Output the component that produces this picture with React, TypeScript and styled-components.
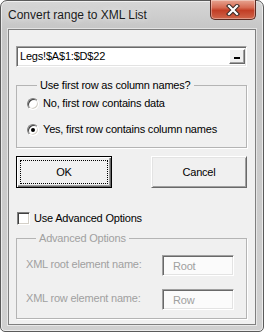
import styled, { createGlobalStyle } from "styled-components";

const GlobalStyle = createGlobalStyle`
  html, body {
    margin: 0;
    padding: 0;
    background: #ffffff;
  }
  body {
    font-family: "Liberation Sans", Arial, sans-serif;
  }
`;

const Window = styled.div`
  width: 264px;
  height: 332px;
  box-sizing: border-box;
  display: flex;
  flex-direction: column;
  padding: 0 7px 6px;
  border: 1px solid #5a5a5a;
  border-radius: 7px 7px 5px 5px;
  background: linear-gradient(to bottom, #d6d6d6 0, #c6c6c6 28px, #cbcbcb 60%, #d0d0d0 100%);
  box-shadow: inset 0 0 0 1px rgba(255, 255, 255, 0.6);
`;

const TitleBar = styled.div`
  height: 28px;
  display: flex;
  align-items: flex-start;
  justify-content: space-between;
  flex-shrink: 0;
`;

const Title = styled.div`
  padding-top: 7px;
  font-size: 12px;
  line-height: 15px;
  color: #1b1b1b;
  text-shadow: 0 0 6px rgba(255, 255, 255, 0.9);
`;

const CloseButton = styled.div`
  width: 46px;
  height: 20px;
  margin-top: -1px;
  box-sizing: border-box;
  display: flex;
  align-items: center;
  justify-content: center;
  border: 1px solid #5b2b22;
  border-top: none;
  border-radius: 0 0 5px 5px;
  background: linear-gradient(to bottom, #e7a592 0, #d66a52 40%, #c23e25 55%, #d0664b 100%);
  box-shadow: inset 0 0 0 1px rgba(255, 255, 255, 0.35);
`;

const Client = styled.div`
  flex: 1;
  display: flex;
  flex-direction: column;
  padding: 16px 8px 0 7px;
  background: #f0f0f0;
  border: 1px solid #7f7f7f;
  box-shadow: 0 0 0 1px rgba(255, 255, 255, 0.5);
  font-size: 11px;
  letter-spacing: -0.2px;
  color: #000;
`;

const RangeBox = styled.div`
  height: 21px;
  box-sizing: border-box;
  display: flex;
  align-items: center;
  justify-content: space-between;
  background: #ffffff;
  border: 1px solid;
  border-color: #a0a0a0 #ffffff #ffffff #a0a0a0;
  box-shadow: inset 1px 1px 0 #696969, inset -1px -1px 0 #e3e3e3;
  padding: 1px 1px 1px 3px;
`;

const RangeText = styled.span`
  font-size: 11px;
  line-height: 13px;
  color: #000;
`;

const PickButton = styled.div`
  width: 16px;
  height: 15px;
  box-sizing: border-box;
  display: flex;
  align-items: flex-end;
  justify-content: center;
  padding-bottom: 4px;
  background: #f0f0f0;
  border: 1px solid;
  border-color: #ffffff #696969 #696969 #ffffff;
  box-shadow: inset -1px -1px 0 #a0a0a0;
`;

const PickBar = styled.span`
  width: 6px;
  height: 2px;
  background: #000;
`;

const Group = styled.fieldset<{ $top: number; $bottom: number; $left: number }>`
  margin: ${(p) => p.$top}px 0 0;
  padding: 0 0 ${(p) => p.$bottom}px ${(p) => p.$left}px;
  border: 1px solid #b4b4b4;
  border-radius: 0;
  box-shadow: 1px 1px 0 #ffffff;
  min-width: 0;
`;

const Legend = styled.legend<{ $disabled?: boolean }>`
  margin-left: 10px;
  padding: 0 3px;
  font-size: 11px;
  line-height: 13px;
  color: ${(p) => (p.$disabled ? "#a0a0a0" : "#000")};
`;

const OptionRow = styled.label<{ $top: number }>`
  display: flex;
  align-items: center;
  gap: 4px;
  margin-top: ${(p) => p.$top}px;
  line-height: 13px;
`;

const Radio = styled.span<{ $checked?: boolean }>`
  width: 12px;
  height: 12px;
  box-sizing: border-box;
  border-radius: 50%;
  border: 1px solid;
  border-color: #808080 #ffffff #ffffff #808080;
  box-shadow: inset 1px 1px 0 #404040, inset -1px -1px 0 #d4d0c8;
  background: #ffffff;
  display: flex;
  align-items: center;
  justify-content: center;

  &::after {
    content: "";
    width: 4px;
    height: 4px;
    border-radius: 50%;
    background: ${(p) => (p.$checked ? "#000" : "transparent")};
  }
`;

const ButtonRow = styled.div`
  display: flex;
  justify-content: space-between;
  margin-top: 8px;
`;

const DialogButton = styled.div<{ $default?: boolean }>`
  position: relative;
  width: 96px;
  height: 32px;
  box-sizing: border-box;
  display: flex;
  align-items: center;
  justify-content: center;
  background: #f0f0f0;
  font-size: 11px;
  color: #000;
  border: 1px solid;
  border-color: ${(p) => (p.$default ? "#000" : "#ffffff #696969 #696969 #ffffff")};
  box-shadow: ${(p) =>
    p.$default
      ? "inset 1px 1px 0 #ffffff, inset -1px -1px 0 #696969, inset -2px -2px 0 #a0a0a0"
      : "inset 1px 1px 0 #e3e3e3, inset -1px -1px 0 #a0a0a0"};

  &::after {
    content: "";
    display: ${(p) => (p.$default ? "block" : "none")};
    position: absolute;
    inset: 3px;
    border: 1px dotted #000;
  }
`;

const CheckRow = styled.label`
  display: flex;
  align-items: center;
  gap: 4px;
  margin-top: 24px;
  padding-left: 1px;
  line-height: 13px;
`;

const CheckBox = styled.span`
  width: 13px;
  height: 13px;
  box-sizing: border-box;
  background: #ffffff;
  border: 1px solid;
  border-color: #808080 #ffffff #ffffff #808080;
  box-shadow: inset 1px 1px 0 #404040, inset -1px -1px 0 #d4d0c8;
`;

const FieldRow = styled.div<{ $top: number }>`
  display: flex;
  align-items: center;
  justify-content: space-between;
  padding-right: 12px;
  margin-top: ${(p) => p.$top}px;
`;

const FieldLabel = styled.span`
  color: #a0a0a0;
  line-height: 13px;
  padding-bottom: 3px;
`;

const FieldBox = styled.div`
  width: 72px;
  height: 21px;
  box-sizing: border-box;
  display: flex;
  align-items: center;
  padding-left: 10px;
  padding-top: 1px;
  background: #fbfbfb;
  color: #a0a0a0;
  border: 1px solid;
  border-color: #a0a0a0 #ffffff #ffffff #a0a0a0;
  box-shadow: inset 1px 1px 0 #696969, inset -1px -1px 0 #e3e3e3;
`;

export default function App() {
  return (
    <>
      <GlobalStyle />
      <Window>
        <TitleBar>
          <Title>Convert range to XML List</Title>
          <CloseButton>
            <svg width="14" height="12" viewBox="0 0 14 12">
              <path d="M3 2 L11 10 M11 2 L3 10" stroke="#3a2a26" strokeWidth="4.2" strokeLinecap="square" />
              <path d="M3 2 L11 10 M11 2 L3 10" stroke="#ffffff" strokeWidth="2.2" strokeLinecap="square" />
            </svg>
          </CloseButton>
        </TitleBar>
        <Client>
          <RangeBox>
            <RangeText>Legs!$A$1:$D$22</RangeText>
            <PickButton>
              <PickBar />
            </PickButton>
          </RangeBox>

          <Group $top={12} $bottom={11} $left={10}>
            <Legend>Use first row as column names?</Legend>
            <OptionRow $top={5}>
              <Radio />
              No, first row contains data
            </OptionRow>
            <OptionRow $top={13}>
              <Radio $checked />
              Yes, first row contains column names
            </OptionRow>
          </Group>

          <ButtonRow>
            <DialogButton $default>OK</DialogButton>
            <DialogButton>Cancel</DialogButton>
          </ButtonRow>

          <CheckRow>
            <CheckBox />
            Use Advanced Options
          </CheckRow>

          <Group $top={7} $bottom={8} $left={9}>
            <Legend $disabled>Advanced Options</Legend>
            <FieldRow $top={10}>
              <FieldLabel>XML root element name:</FieldLabel>
              <FieldBox>Root</FieldBox>
            </FieldRow>
            <FieldRow $top={13}>
              <FieldLabel>XML row element name:</FieldLabel>
              <FieldBox>Row</FieldBox>
            </FieldRow>
          </Group>
        </Client>
      </Window>
    </>
  );
}
